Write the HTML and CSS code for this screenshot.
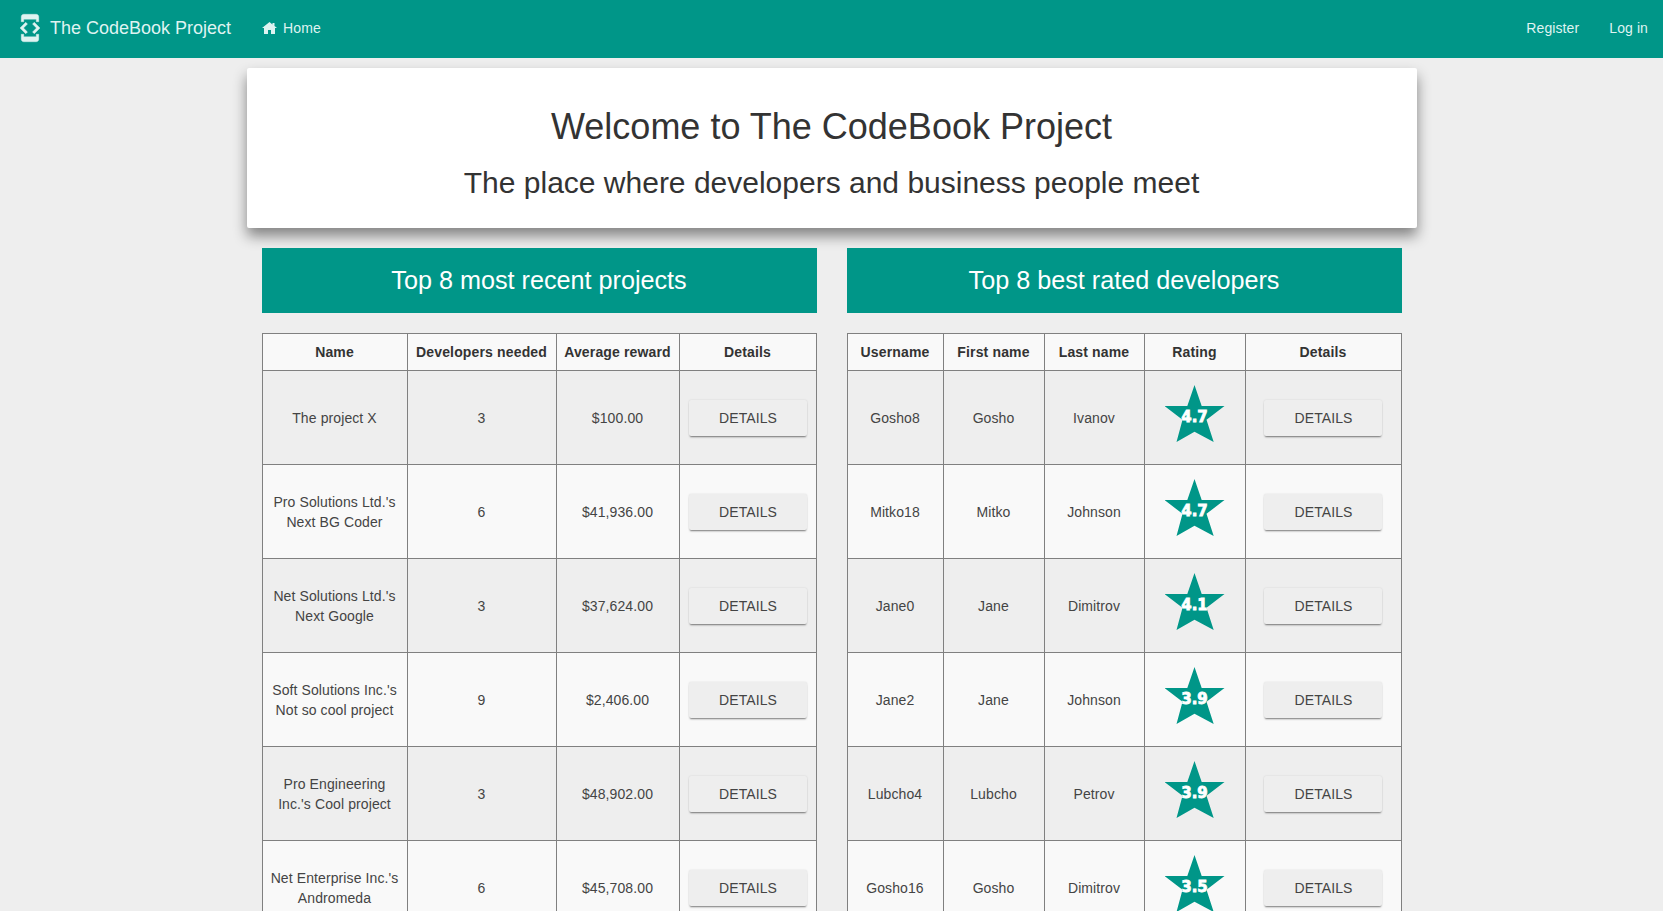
FILE: index.html

```html
<!DOCTYPE html>
<html lang="en">
<head>
  <meta charset="UTF-8">
  <title>The CodeBook Project</title>
  <link rel="stylesheet" href="styles.css">
</head>
<body>

  <!-- Navigation -->
  <nav class="navbar">
    <a class="brand" href="#">
      <svg class="brand-icon" viewBox="0 0 24 24"><path d="M7 5h10v2h2V3c0-1.1-.9-1.99-2-1.99L7 1c-1.1 0-2 .9-2 2v4h2V5zm8.41 11.59L20 12l-4.59-4.59L14 8.83 17.17 12 14 15.17l1.41 1.42zM10 15.17L6.83 12 10 8.83 8.59 7.41 4 12l4.59 4.59L10 15.17zM17 19H7v-2H5v4c0 1.1.9 2 2 2h10c1.1 0 2-.9 2-2v-4h-2v2z"/></svg>
      The CodeBook Project
    </a>
    <a class="nav-link" href="#">
      <svg class="home-icon" viewBox="0 0 15 12"><path d="M7.500 0L10.500 2.400V1H12.500V4L15 6H13V12H9V8H6V12H2V6H0z"/></svg>
      Home
    </a>
    <div class="nav-right">
      <a class="nav-link" href="#">Register</a>
      <a class="nav-link" href="#">Log in</a>
    </div>
  </nav>

  <main class="container">
    <section class="jumbotron">
      <h1>Welcome to The CodeBook Project</h1>
      <h2>The place where developers and business people meet</h2>
    </section>

    <div class="columns">
      <!-- Projects -->
      <section class="column">
        <h3 class="panel-title">Top 8 most recent projects</h3>
        <table class="grid">
          <colgroup>
            <col class="c-name"><col class="c-needed"><col class="c-reward"><col>
          </colgroup>
          <thead>
            <tr><th>Name</th><th>Developers needed</th><th>Average reward</th><th>Details</th></tr>
          </thead>
          <tbody>
            <tr><td>The project X</td><td>3</td><td>$100.00</td><td><button class="btn">Details</button></td></tr>
            <tr><td>Pro Solutions Ltd.'s<br>Next BG Coder</td><td>6</td><td>$41,936.00</td><td><button class="btn">Details</button></td></tr>
            <tr><td>Net Solutions Ltd.'s<br>Next Google</td><td>3</td><td>$37,624.00</td><td><button class="btn">Details</button></td></tr>
            <tr><td>Soft Solutions Inc.'s<br>Not so cool project</td><td>9</td><td>$2,406.00</td><td><button class="btn">Details</button></td></tr>
            <tr><td>Pro Engineering<br>Inc.'s Cool project</td><td>3</td><td>$48,902.00</td><td><button class="btn">Details</button></td></tr>
            <tr><td>Net Enterprise Inc.'s<br>Andromeda</td><td>6</td><td>$45,708.00</td><td><button class="btn">Details</button></td></tr>
          </tbody>
        </table>
      </section>

      <!-- Developers -->
      <section class="column">
        <h3 class="panel-title">Top 8 best rated developers</h3>
        <table class="grid">
          <colgroup>
            <col class="c-user"><col class="c-first"><col class="c-last"><col class="c-rating"><col>
          </colgroup>
          <thead>
            <tr><th>Username</th><th>First name</th><th>Last name</th><th>Rating</th><th>Details</th></tr>
          </thead>
          <tbody>
            <tr><td>Gosho8</td><td>Gosho</td><td>Ivanov</td><td><div class="star">4.7</div></td><td><button class="btn">Details</button></td></tr>
            <tr><td>Mitko18</td><td>Mitko</td><td>Johnson</td><td><div class="star">4.7</div></td><td><button class="btn">Details</button></td></tr>
            <tr><td>Jane0</td><td>Jane</td><td>Dimitrov</td><td><div class="star">4.1</div></td><td><button class="btn">Details</button></td></tr>
            <tr><td>Jane2</td><td>Jane</td><td>Johnson</td><td><div class="star">3.9</div></td><td><button class="btn">Details</button></td></tr>
            <tr><td>Lubcho4</td><td>Lubcho</td><td>Petrov</td><td><div class="star">3.9</div></td><td><button class="btn">Details</button></td></tr>
            <tr><td>Gosho16</td><td>Gosho</td><td>Dimitrov</td><td><div class="star">3.5</div></td><td><button class="btn">Details</button></td></tr>
          </tbody>
        </table>
      </section>
    </div>
  </main>

</body>
</html>
```

FILE: styles.css

```css
html, body {
  height: 100%;
  overflow: hidden;
}

body {
  margin: 0;
  font-family: "Liberation Sans", Arial, sans-serif;
  font-size: 14px;
  line-height: 20px;
  background: #eeeeee;
  color: #333;
}

a {
  color: inherit;
  text-decoration: none;
}

.navbar {
  display: flex;
  align-items: center;
  height: 58px;
  padding-left: 20px;
  padding-bottom: 2px;
  box-sizing: border-box;
  background: #009688;
  color: #dff3f1;
}

.brand {
  display: flex;
  align-items: center;
  font-size: 18px;
  margin-right: 16px;
}

.brand-icon {
  width: 30px;
  height: 30px;
  margin: 0 5px 0 -5px;
  fill: currentColor;
  stroke: currentColor;
  stroke-width: 0.3;
}

.nav-link {
  display: flex;
  align-items: center;
  padding: 0 15px;
  letter-spacing: 0.1px;
}

.home-icon {
  width: 15px;
  height: 12px;
  margin-right: 6px;
  fill: currentColor;
}

.nav-right {
  display: flex;
  margin-left: auto;
}

.container {
  width: 1170px;
  margin: 10px auto 0;
}

.jumbotron {
  height: 160px;
  box-sizing: border-box;
  padding-top: 39px;
  background: #fff;
  text-align: center;
  box-shadow: 0 8px 14px rgba(0,0,0,0.45);
  border-radius: 2px;
}

.jumbotron h1 {
  margin: 0;
  font-size: 36px;
  line-height: 40px;
  font-weight: 400;
}

.jumbotron h2 {
  margin: 19px 0 0;
  font-size: 30px;
  line-height: 33px;
  font-weight: 400;
}

.columns {
  display: flex;
  margin-top: 20px;
}

.column {
  width: 585px;
  box-sizing: border-box;
  padding: 0 15px;
}

.panel-title {
  margin: 0 0 20px;
  height: 65px;
  line-height: 65px;
  background: #009688;
  color: #fff;
  font-size: 25.2px;
  font-weight: 400;
  text-align: center;
}

.grid {
  width: 100%;
  table-layout: fixed;
  border-collapse: collapse;
  background: #f9f9f9;
}

.grid th, .grid td {
  border: 1px solid #808080;
  text-align: center;
  vertical-align: middle;
  padding: 0;
}

.grid th {
  height: 36px;
  color: #333;
  letter-spacing: 0.15px;
}

.grid td {
  height: 93px;
  color: #444;
  letter-spacing: 0.1px;
}

.grid tbody tr:nth-child(odd) {
  background: #eeeeee;
}

.c-name { width: 145px; }
.c-needed { width: 149px; }
.c-reward { width: 123px; }
.c-user { width: 96px; }
.c-first { width: 101px; }
.c-last { width: 100px; }
.c-rating { width: 101px; }

.btn {
  width: 118px;
  height: 36px;
  padding: 0 0 0 1px;
  border: none;
  border-radius: 2px;
  background: #eeeeee;
  color: #444;
  font-family: inherit;
  font-size: 14px;
  letter-spacing: 0.1px;
  text-transform: uppercase;
  box-shadow: 0 2px 2px -1px rgba(0,0,0,0.5), 0 0 2px rgba(0,0,0,0.12);
}

.star {
  display: flex;
  align-items: center;
  justify-content: center;
  width: 60px;
  height: 57px;
  margin: 0 auto 8px;
  padding-top: 6px;
  box-sizing: border-box;
  background: #009688;
  color: #fff;
  font-family: "DejaVu Sans", sans-serif;
  font-size: 15px;
  font-weight: 700;
  letter-spacing: 0;
  -webkit-text-stroke: 0.8px #fff;
  clip-path: polygon(50% 0, 62% 37%, 100% 37%, 70% 61%, 82% 100%, 50% 82%, 20% 100%, 30% 61%, 0 37%, 38% 37%);
}
```
